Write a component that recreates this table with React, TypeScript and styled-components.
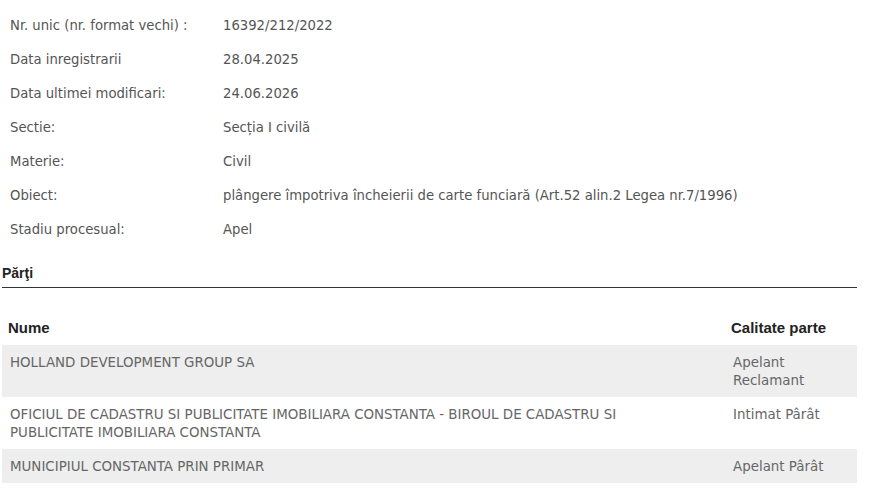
import React from "react";
import styled, { createGlobalStyle } from "styled-components";

const Global = createGlobalStyle`
  html, body { margin: 0; padding: 0; background: #fff; }
  body { font-family: "DejaVu Sans Condensed", "DejaVu Sans", sans-serif; }
`;

const Page = styled.div`
  width: 877px;
  padding: 7px 20px 0 2px;
  box-sizing: border-box;
`;

const InfoList = styled.div`
  display: flex;
  flex-direction: column;
  padding-left: 8px;
`;

const InfoRow = styled.div`
  display: grid;
  grid-template-columns: 213px 1fr;
  height: 34px;
  align-items: center;
  font-size: 14.7px;
  color: #555;
`;

const SectionTitle = styled.div`
  margin-top: 20px;
  padding-bottom: 6px;
  border-bottom: 1px solid #333;
  font-family: "Liberation Sans", Arial, sans-serif;
  font-weight: bold;
  font-size: 14px;
  color: #222;
`;

const Table = styled.table`
  margin-top: 23px;
  width: 855px;
  border-collapse: collapse;
`;

const Th = styled.th`
  text-align: left;
  padding: 8px 8px 8px 6px;
  line-height: 18px;
  font-family: "Liberation Sans", Arial, sans-serif;
  font-weight: bold;
  font-size: 15px;
  color: #222;
  vertical-align: bottom;
`;

const Tr = styled.tr<{ $shaded: boolean }>`
  background: ${(p) => (p.$shaded ? "#eeeeee" : "#fff")};
`;

const Td = styled.td<{ $wide?: boolean }>`
  padding: 8px ${(p) => (p.$wide ? "40px" : "8px")} 8px 8px;
  line-height: 18px;
  font-size: 14.9px;
  color: #666;
  vertical-align: top;
`;

const info: [string, string][] = [
  ["Nr. unic (nr. format vechi) :", "16392/212/2022"],
  ["Data inregistrarii", "28.04.2025"],
  ["Data ultimei modificari:", "24.06.2026"],
  ["Sectie:", "Secția I civilă"],
  ["Materie:", "Civil"],
  ["Obiect:", "plângere împotriva încheierii de carte funciară (Art.52 alin.2 Legea nr.7/1996)"],
  ["Stadiu procesual:", "Apel"],
];

const parti: [string, string][] = [
  ["HOLLAND DEVELOPMENT GROUP SA", "Apelant Reclamant"],
  ["OFICIUL DE CADASTRU SI PUBLICITATE IMOBILIARA CONSTANTA - BIROUL DE CADASTRU SI PUBLICITATE IMOBILIARA CONSTANTA", "Intimat Pârât"],
  ["MUNICIPIUL CONSTANTA PRIN PRIMAR", "Apelant Pârât"],
];

export default function App() {
  return (
    <>
      <Global />
      <Page>
        <InfoList>
          {info.map(([k, v]) => (
            <InfoRow key={k}>
              <span>{k}</span>
              <span>{v}</span>
            </InfoRow>
          ))}
        </InfoList>
        <SectionTitle>Părţi</SectionTitle>
        <Table>
          <colgroup>
            <col />
            <col style={{ width: 132 }} />
          </colgroup>
          <thead>
            <tr>
              <Th>Nume</Th>
              <Th>Calitate parte</Th>
            </tr>
          </thead>
          <tbody>
            {parti.map(([n, c], i) => (
              <Tr key={n} $shaded={i % 2 === 0}>
                <Td $wide>{n}</Td>
                <Td>{c}</Td>
              </Tr>
            ))}
          </tbody>
        </Table>
      </Page>
    </>
  );
}
